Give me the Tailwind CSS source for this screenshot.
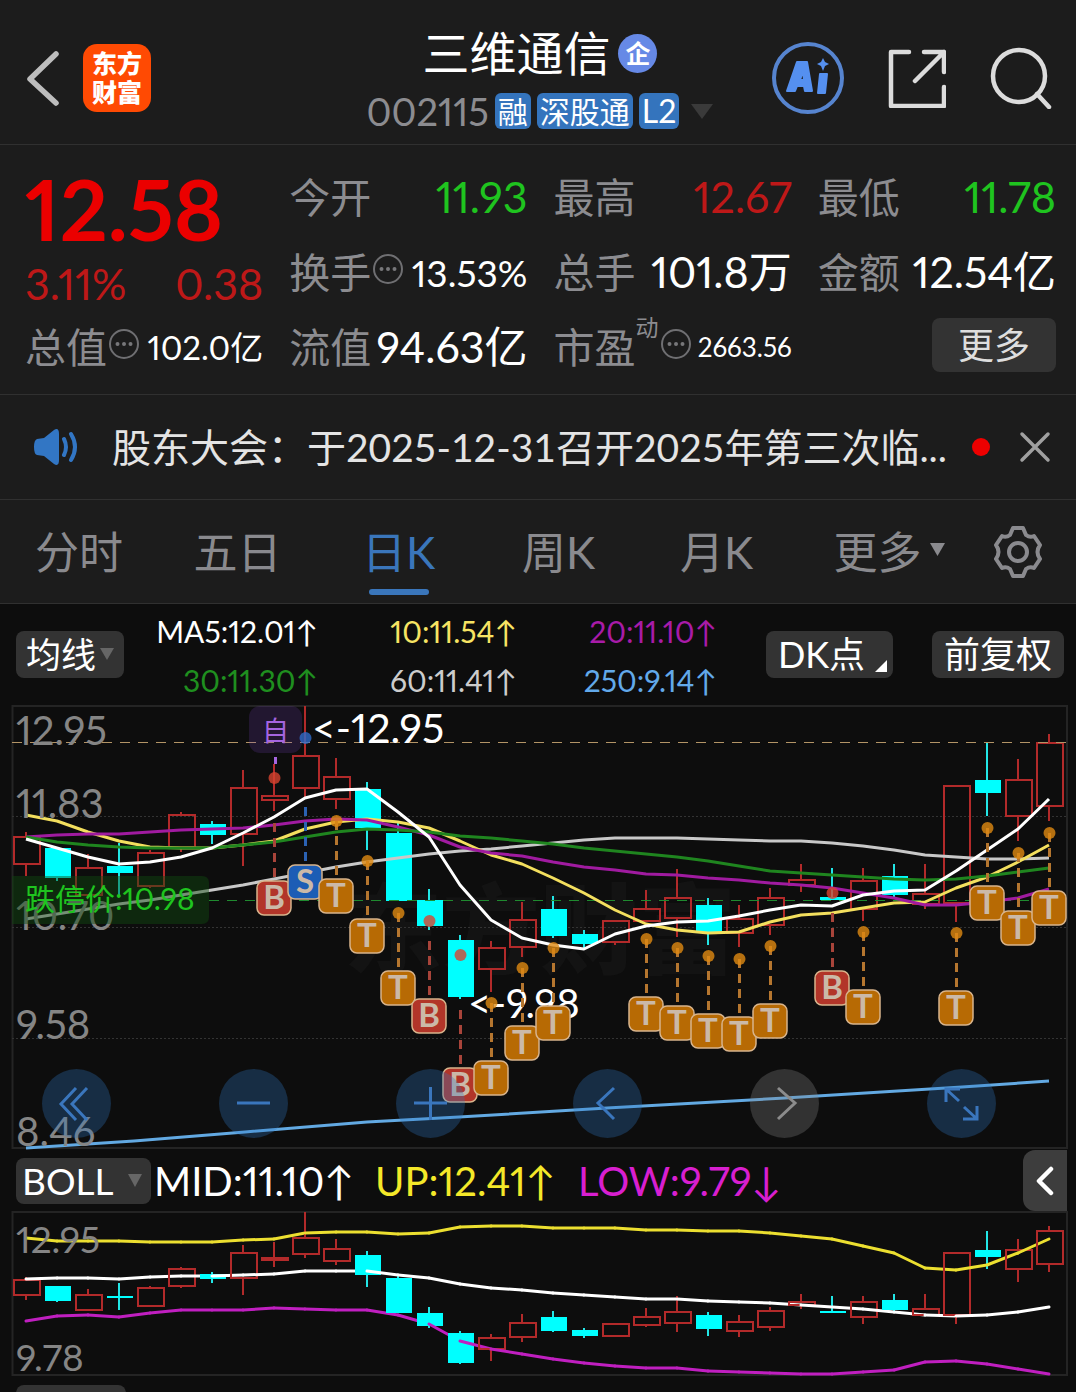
<!DOCTYPE html>
<html lang="zh-CN">
<head>
<meta charset="utf-8">
<meta name="viewport" content="width=device-width, initial-scale=1">
<title>三维通信 002115</title>
<script src="https://cdn.jsdelivr.net/npm/@tailwindcss/browser@4"></script>
</head>
<body class="h-screen overflow-hidden bg-[#0d0d0d] font-['Lato','Noto_Sans_CJK_SC',sans-serif] proportional-nums text-white">

<header class="grid h-[145px] grid-cols-[1fr_auto_1fr] items-center border-b border-[#303030] bg-[#1c1c1c] pt-3 pr-6 pl-6">
  <div class="flex items-center gap-[23px]">
    <button aria-label="返回" class="block"><svg width="36" height="60" viewBox="0 0 36 60" fill="none" stroke="#bdbdbd" stroke-width="5.5" stroke-linecap="round" stroke-linejoin="round"><path d="M32 6 6 31 32 55"/></svg></button>
    <a href="#" class="flex h-[68px] w-[68px] flex-col items-center justify-center rounded-[14px] bg-[#ff4a03] text-[25px] leading-[29px] font-black"><span>东方</span><span>财富</span></a>
  </div>
  <div class="flex flex-col items-center pt-1 pl-1">
    <div class="flex h-[62px] items-center gap-2">
      <h1 class="text-[47px] leading-[62px]">三维通信</h1>
      <span class="flex h-[39px] w-[39px] items-center justify-center rounded-full bg-[#6689e6] text-[25px] leading-none font-bold">企</span>
    </div>
    <div class="flex h-[54px] items-center gap-[6px]">
      <span class="text-[38px] leading-[54px] text-[#8c8c90]">002115</span>
      <span class="flex h-9 items-center rounded-md bg-[#3474bd] px-[3px] text-[30px]">融</span>
      <span class="flex h-9 items-center rounded-md bg-[#3474bd] px-[3px] text-[30px]">深股通</span>
      <span class="flex h-9 items-center rounded-md bg-[#3474bd] px-[3px] text-[32px]">L2</span>
      <svg class="ml-[6px]" width="22" height="15" viewBox="0 0 22 15"><path d="M0 0h22L11 15z" fill="#3a3a3a"/></svg>
    </div>
  </div>
  <div class="flex items-center justify-end gap-11">
    <button aria-label="AI"><svg width="72" height="74" viewBox="0 0 72 74"><circle cx="36" cy="37" r="34" fill="none" stroke="#5684cf" stroke-width="4"/><path fill="#5590f0" stroke="#5590f0" stroke-width="2" stroke-linejoin="round" fill-rule="evenodd" d="M25 21h10l5 29h-7l-1-5h-7l-2 5h-8zM28 39h4l-1-9z"/><path fill="#5590f0" stroke="#5590f0" stroke-width="2" stroke-linejoin="round" d="M48 33h7l-2 19h-7z"/><path fill="#5590f0" d="M51 17l2 4 4 2-4 2-2 5-2-5-4-2 4-2z"/></svg></button>
    <button aria-label="分享"><svg width="58" height="60" viewBox="0 0 58 60" fill="none" stroke="#dcdcdc" stroke-width="4.5" stroke-linecap="round" stroke-linejoin="round"><path d="M21 4H3v54h53V39M36 4h20v20M56 4 27 33"/></svg></button>
    <button aria-label="搜索"><svg width="62" height="62" viewBox="0 0 62 62" fill="none" stroke="#dcdcdc" stroke-width="4.5" stroke-linecap="round"><circle cx="29" cy="29" r="26"/><path d="m47 47 12 13"/></svg></button>
  </div>
</header>

<section class="grid h-[250px] grid-cols-4 grid-rows-[75px_75px_75px] gap-x-[26px] border-b border-[#303030] bg-[#1c1c1c] pt-[15px] pr-5 pl-[25px] text-[43px] whitespace-nowrap">
  <div class="row-span-2 text-[#be1818]">
    <div class="flex h-[98px] items-center text-[84px] leading-none font-bold text-[#eb0000]">12.58</div>
    <div class="flex h-[52px] items-center justify-between"><span>3.11%</span><span>0.38</span></div>
  </div>
  <div class="flex items-center justify-between"><span class="text-[41px] text-[#8c8c90]">今开</span><span class="text-[#1fc41f]">11.93</span></div>
  <div class="flex items-center justify-between"><span class="text-[41px] text-[#8c8c90]">最高</span><span class="text-[#be1818]">12.67</span></div>
  <div class="flex items-center justify-between"><span class="text-[41px] text-[#8c8c90]">最低</span><span class="text-[#1fc41f]">11.78</span></div>
  <div class="flex items-center justify-between"><span class="flex items-center text-[41px] text-[#8c8c90]">换手<svg class="mb-2" width="32" height="32" viewBox="0 0 32 32"><circle cx="17" cy="16" r="14" fill="none" stroke="#6f6f72" stroke-width="2"/><path d="M10.500 16h.01M17 16h.01M23.500 16h.01" stroke="#77777a" stroke-width="4" stroke-linecap="round"/></svg></span><span class="text-[37px]">13.53%</span></div>
  <div class="flex items-center justify-between"><span class="text-[41px] text-[#8c8c90]">总手</span><span>101.8万</span></div>
  <div class="flex items-center justify-between"><span class="text-[41px] text-[#8c8c90]">金额</span><span>12.54亿</span></div>
  <div class="flex items-center justify-between"><span class="flex items-center text-[41px] text-[#8c8c90]">总值<svg class="mb-2" width="32" height="32" viewBox="0 0 32 32"><circle cx="17" cy="16" r="14" fill="none" stroke="#6f6f72" stroke-width="2"/><path d="M10.500 16h.01M17 16h.01M23.500 16h.01" stroke="#77777a" stroke-width="4" stroke-linecap="round"/></svg></span><span class="text-[33px]">102.0亿</span></div>
  <div class="flex items-center justify-between"><span class="text-[41px] text-[#8c8c90]">流值</span><span>94.63亿</span></div>
  <div class="flex items-center justify-between"><span class="flex items-center text-[41px] text-[#8c8c90]">市盈<span class="mb-10 text-[23px] leading-none">动</span><svg class="mb-2" width="32" height="32" viewBox="0 0 32 32"><circle cx="17" cy="16" r="14" fill="none" stroke="#6f6f72" stroke-width="2"/><path d="M10.500 16h.01M17 16h.01M23.500 16h.01" stroke="#77777a" stroke-width="4" stroke-linecap="round"/></svg></span><span class="text-[26px]">2663.56</span></div>
  <div class="flex items-center justify-end"><button class="mb-[6px] h-[54px] w-[124px] rounded-lg bg-[#333] text-[36px] leading-none text-[#dedede]">更多</button></div>
</section>

<section class="flex h-[105px] items-center border-b border-[#303030] bg-[#1c1c1c] pr-6 pl-[34px]">
  <svg class="shrink-0" width="46" height="40" viewBox="0 0 46 40"><path d="M3 12q-3 1-3 8t3 8l7 1 10 8q5 3 5-4V7q0-7-5-4l-10 8z" fill="#3276c4"/><path d="M30 12q4 8 0 16M37 7q8 13 0 26" fill="none" stroke="#3276c4" stroke-width="4" stroke-linecap="round"/></svg>
  <a href="#" class="ml-8 min-w-0 flex-1 overflow-hidden text-[39px] whitespace-nowrap text-[#e4e4e4] tabular-nums">股东大会：于2025-12-31召开2025年第三次临...</a>
  <span class="mx-2 h-[18px] w-[18px] shrink-0 rounded-full bg-[#ee0000]"></span>
  <button aria-label="关闭" class="ml-[20px] shrink-0"><svg width="34" height="34" viewBox="0 0 34 34" stroke="#a0a0a0" stroke-width="3.500" stroke-linecap="round"><path d="M4 4l26 26M30 4 4 30"/></svg></button>
</section>

<nav class="grid h-[104px] grid-cols-[158fr_159fr_163fr_157fr_159fr_186fr_94fr] items-center border-b border-[#303030] bg-[#1c1c1c] text-[44px] text-[#8a8a8e]">
  <a href="#" class="text-center">分时</a>
  <a href="#" class="text-center">五日</a>
  <a href="#" class="relative text-center text-[#3a76bb]">日K<span class="absolute bottom-[-10px] left-1/2 h-[6px] w-[60px] -translate-x-1/2 rounded-full bg-[#3a76bb]"></span></a>
  <a href="#" class="text-center">周K</a>
  <a href="#" class="text-center">月K</a>
  <a href="#" class="flex items-center justify-center gap-2">更多<svg class="mb-1" width="15" height="13" viewBox="0 0 15 13"><path d="M0 0h15L7.500 13z" fill="#8a8a8e"/></svg></a>
  <button aria-label="设置" class="pl-[9px]"><svg width="54" height="54" viewBox="0 0 54 54" fill="none" stroke="#8a8a8e" stroke-width="4" stroke-linejoin="round"><circle cx="27" cy="27" r="9"/><path d="M22 3h10l3 7q4 3 8 1l6 9q-5 7 0 14l-6 9q-4-2-8 1l-3 7H22l-3-7q-4-3-8-1l-6-9q5-7 0-14l6-9q4 2 8-1z"/></svg></button>
</nav>

<section class="flex h-[100px] items-center pr-3 pl-4">
  <button class="flex h-[47px] w-[108px] shrink-0 items-center justify-center gap-1 rounded-lg bg-[#333] text-[35px] leading-none">均线<svg width="14" height="12" viewBox="0 0 14 12"><path d="M0 0h14L7 12z" fill="#666"/></svg></button>
  <div class="grid grid-cols-[194px_199px_200px] grid-rows-[49px_49px] items-center pt-1 text-right text-[30px] whitespace-nowrap">
    <span>MA5:12.01↑</span><span class="text-[#f7e463]">10:11.54↑</span><span class="text-[#a81ba8]">20:11.10↑</span>
    <span class="text-[#1f8f1f]">30:11.30↑</span><span class="text-[#cccccc]">60:11.41↑</span><span class="text-[#62a9ea]">250:9.14↑</span>
  </div>
  <button class="relative ml-auto h-[47px] w-[127px] shrink-0 rounded-lg bg-[#333] pr-4 text-[36px] leading-none">DK点<svg class="absolute right-[6px] bottom-[6px]" width="12" height="12" viewBox="0 0 12 12"><path d="M12 0v12H0z" fill="#fff"/></svg></button>
  <button class="ml-[39px] h-[47px] w-[132px] shrink-0 rounded-lg bg-[#333] text-[36px] leading-none">前复权</button>
</section>

<section class="relative">
  <svg id="kline" class="block h-auto w-full" viewBox="0 704 1076 446" role="img" aria-label="日K线图"></svg>
  <div class="absolute inset-x-0 bottom-3 flex justify-between pr-20 pl-[42px]">
    <button aria-label="最早" class="h-[69px] w-[69px] rounded-full bg-[#2f76c4]/30"><svg width="69" height="69" viewBox="0 0 69 69" fill="none" stroke="#3a76bd" stroke-width="3"><path d="M34 19 19 35l15 16M45 19 30 35l15 16"/></svg></button>
    <button aria-label="缩小" class="h-[69px] w-[69px] rounded-full bg-[#2f76c4]/30"><svg width="69" height="69" viewBox="0 0 69 69" fill="none" stroke="#3a76bd" stroke-width="3"><path d="M18 34h33"/></svg></button>
    <button aria-label="放大" class="h-[69px] w-[69px] rounded-full bg-[#2f76c4]/30"><svg width="69" height="69" viewBox="0 0 69 69" fill="none" stroke="#3a76bd" stroke-width="3"><path d="M18 34h33M34.500 18v33"/></svg></button>
    <button aria-label="左移" class="h-[69px] w-[69px] rounded-full bg-[#2f76c4]/30"><svg width="69" height="69" viewBox="0 0 69 69" fill="none" stroke="#3a76bd" stroke-width="3"><path d="M41 19 25 34l16 16"/></svg></button>
    <button aria-label="右移" class="h-[69px] w-[69px] rounded-full bg-[#888]/30"><svg width="69" height="69" viewBox="0 0 69 69" fill="none" stroke="#8c8c8c" stroke-width="3"><path d="m28 19 17 15-17 16"/></svg></button>
    <button aria-label="全屏" class="h-[69px] w-[69px] rounded-full bg-[#2f76c4]/30"><svg width="69" height="69" viewBox="0 0 69 69" fill="none" stroke="#3a76bd" stroke-width="3"><path d="M19 33V20h14M20 21l12 11M37 38l13 12M50 37v13H36"/></svg></button>
  </div>
</section>

<section class="flex h-[61px] items-center pr-[9px] pl-4 text-[40px] whitespace-nowrap">
  <button class="flex h-[46px] w-[135px] shrink-0 items-center justify-between rounded-lg bg-[#333] pr-[9px] pl-[6px] text-[37px] leading-none">BOLL<svg width="14" height="13" viewBox="0 0 14 13"><path d="M0 0h14L7 13z" fill="#666"/></svg></button>
  <span class="ml-[3px] w-[221px]">MID:11.10↑</span>
  <span class="w-[203px] text-[#f4e829]">UP:12.41↑</span>
  <span class="text-[#d81fd0]">LOW:9.79↓</span>
  <button aria-label="展开" class="ml-auto flex h-[61px] w-[44px] items-center justify-center rounded-l-xl bg-[#3d3d3d]"><svg width="20" height="30" viewBox="0 0 20 30" fill="none" stroke="#fff" stroke-width="4.500" stroke-linecap="round" stroke-linejoin="round"><path d="M16 3 4 15l12 12"/></svg></button>
</section>

<svg id="boll" class="block h-auto w-full" viewBox="0 1211 1076 166" role="img" aria-label="BOLL指标图"></svg>
<div class="pt-2 pl-4"><button aria-label="副图指标" class="h-[46px] w-[110px] rounded-lg bg-[#333]"></button></div>

<script>
const RED = '#b22a2a', CYAN = '#00ffff', STEP = 31, X0 = 26;
const cx = i => X0 + STEP * i;
const line = (ys, color, w = 3) => `<polyline fill="none" stroke="${color}" stroke-width="${w}" stroke-linejoin="round" points="${ys.map((y, i) => cx(i) + ',' + y).join(' ')}"/>`;
const segment = (ys, i, color) => i < ys.length - 1 ? `<path d="M${cx(i)} ${ys[i]}L${cx(i + 1)} ${ys[i + 1]}" stroke="${color}" stroke-width="3" stroke-linecap="round"/>` : '';
// candle: [rising, body top, body bottom, high, low]
const candle = ([up, t, b, h, l], i) => {
  const x = cx(i);
  return up
    ? `<path d="M${x} ${h}V${t}M${x} ${b}V${l}M${x - 12} ${t + 1}h26v${Math.max(b - t - 2, 1)}h-26z" fill="none" stroke="${RED}" stroke-width="2"/>`
    : `<path d="M${x} ${h}V${l}" stroke="#22e6e6" stroke-width="2"/><rect x="${x - 12}" y="${t}" width="26" height="${b - t}" fill="${CYAN}"/>`;
};
const label = (x, y, s, size = 40, fill = '#858585') => `<text x="${x}" y="${y}" font-size="${size}" fill="${fill}">${s}</text>`;

const days = [[1,836,865,832,876],[0,848,878,848,881],[1,867,896,854,896],[0,866,873,843,896],[1,852,887,850,888],[1,814,848,812,852],[0,824,835,821,844],[1,787,835,770,866],[1,795,801,764,811],[1,755,789,706,797],[1,776,800,758,809],[0,789,828,782,850],[0,833,901,823,901],[0,900,926,889,930],[0,940,997,935,999],[1,947,970,941,992],[1,919,948,902,957],[0,909,936,896,938],[0,934,944,930,948],[1,920,943,920,945],[1,908,922,890,922],[1,897,919,869,937],[0,905,932,898,945],[1,918,934,905,947],[1,897,926,888,935],[1,879,886,864,892],[0,897,900,868,900],[1,880,910,868,921],[0,876,895,864,897],[1,893,905,864,909],[1,785,904,785,922],[0,780,793,743,816],[1,779,817,759,841],[1,742,807,734,821]];
const ma5 = [839,848,857,864,862,857,848,833,817,798,790,789,812,837,885,920,938,945,949,934,926,922,921,916,910,905,906,895,891,890,871,850,829,799];
const ma10 = [815,821,832,841,847,848,848,845,841,829,822,819,822,828,841,855,864,878,893,910,924,930,933,932,922,915,913,908,903,902,888,877,862,845];
const ma20 = [837,835,834,834,832,830,829,828,825,821,819,820,827,835,847,853,856,862,867,870,874,875,878,880,883,885,888,893,898,905,905,902,898,889];
const ma30 = [837,842,845,847,848,848,848,845,842,837,832,829,830,832,836,838,841,844,848,851,854,857,861,866,871,873,875,877,879,880,879,876,872,868];
const ma60 = [919,914,909,904,900,895,890,885,879,873,867,862,858,854,851,849,846,843,840,838,838,838,839,840,841,841,843,846,850,855,857,859,859,858];
// trade marks: [day, kind, anchor y]
const marks = [[8,'B',778],[9,'S',738],[10,'T',821],[11,'T',861],[12,'T',913],[13,'B',921],[14,'B',955],[15,'T',1003],[16,'T',968],[17,'T',948],[20,'T',939],[21,'T',948],[22,'T',956],[23,'T',959],[24,'T',946],[26,'B',893],[27,'T',932],[30,'T',933],[31,'T',828],[32,'T',853],[33,'T',833]];
const tint = { B: ['#b23529', '#d8432f', '#a8443a'], S: ['#1c5db5', '#2f6bcb', '#2b62b3'], T: ['#b76a04', '#e08a12', '#b5762f'] };
const bottomOf = { '8B': 898, '9S': 882, '13B': 1016, '14B': 1085, '26B': 988 };
const mark = ([i, k, y]) => {
  const x = cx(i), by = bottomOf[i + k] || y + 75, from = k === 'T' ? y : by - 75, [bg, dot, dash] = tint[k];
  return `<path d="M${x + .5} ${from}V${by - 17}" stroke="${dash}" stroke-width="3" stroke-dasharray="9 6"/><circle cx="${x + .5}" cy="${y}" r="6" fill="${dot}" fill-opacity=".8"/>
  <rect x="${x - 17}" y="${by - 17}" width="34" height="34" rx="7" fill="${bg}" stroke="#d8b48c" stroke-width="1.500"/><text x="${x}" y="${by + 11}" font-size="33" font-weight="700" text-anchor="middle" fill="#cbb9a8">${k}</text>`;
};

document.getElementById('kline').innerHTML = `
  <text x="540" y="966" font-size="98" font-weight="900" text-anchor="middle" fill="#131313">东方财富</text>
  <rect x="12.500" y="706" width="1054.500" height="442" fill="none" stroke="#242424" stroke-width="2"/>
  <path d="M12 816.500H1067M12 927.500H1067M12 1038.500H1067" stroke="#333" stroke-dasharray="2 2"/>
  ${days.map(candle).join('')}
  <path d="M12 742.500H1067" stroke="#b39466" stroke-dasharray="10 8"/>
  <path d="M209 900.500H1067" stroke="#1f8a2f" stroke-dasharray="10 8"/>
  ${line(ma60, '#c8c8c8')}${line(ma10, '#f3df5e')}${line(ma20, '#a01ba0')}${line(ma30, '#1f851f')}${line(ma5, '#ffffff')}
  <polyline points="26,1148 134,1141 245,1132 367,1122 459,1117 607,1108 785,1098 962,1087 1049,1081" fill="none" stroke="#62a9e2" stroke-width="3"/>
  ${label(16, 745, '12.95')}${label(16, 818, '11.83')}${label(16, 930, '10.70')}${label(16, 1039, '9.58')}${label(16, 1146, '8.46')}
  <path d="M12 876H202q7 0 7 7v34q0 7-7 7H12z" fill="#0f4a0f" fill-opacity=".45"/>
  ${label(25, 910, '跌停价:10.98', 30, '#1fc41f')}
  <rect x="249" y="706" width="53" height="47" rx="11" fill="#7a3fc0" fill-opacity=".2"/>${label(262, 741, '自', 27, '#a565e0')}
  <path d="M275.500 757v7" stroke="#a565e0" stroke-width="3"/>
  ${label(312, 743, '&lt;-12.95', 41, '#fff')}${label(468, 1018, '&lt;-9.98', 40, '#fff')}
  ${marks.map(mark).join('')}`;

const bollDays = [[1,1279,1296,1277,1300],[0,1286,1301,1286,1302],[1,1294,1311,1289,1311],[0,1296,1298,1283,1310],[1,1287,1307,1286,1307],[1,1268,1287,1267,1288],[0,1274,1279,1272,1283],[1,1252,1279,1245,1295],[1,1257,1261,1242,1267],[1,1237,1255,1212,1258],[1,1248,1262,1239,1265],[0,1255,1275,1251,1287],[0,1278,1313,1274,1313],[0,1313,1326,1307,1328],[0,1333,1363,1331,1364],[1,1337,1350,1334,1361],[1,1322,1338,1314,1342],[0,1317,1331,1311,1332],[0,1330,1336,1328,1338],[1,1323,1337,1323,1337],[1,1316,1326,1308,1327],[1,1311,1324,1296,1332],[0,1315,1329,1312,1336],[1,1321,1332,1315,1337],[1,1310,1328,1307,1331],[1,1301,1306,1294,1309],[0,1311,1313,1296,1313],[1,1301,1318,1296,1324],[0,1300,1310,1294,1312],[1,1308,1316,1294,1316],[1,1252,1316,1252,1324],[0,1250,1257,1231,1269],[1,1249,1270,1239,1282],[1,1230,1265,1226,1272]];
const up = [1238,1241,1241,1241,1242,1242,1242,1240,1239,1233,1232,1232,1234,1233,1227,1226,1226,1228,1228,1228,1230,1230,1231,1231,1233,1236,1239,1246,1253,1268,1270,1265,1253,1239];
const mid = [1279,1278,1278,1279,1277,1276,1276,1275,1274,1271,1271,1271,1275,1278,1284,1288,1290,1293,1295,1297,1299,1299,1301,1302,1303,1305,1307,1309,1312,1315,1316,1315,1312,1307];
const low = [1321,1316,1315,1317,1313,1310,1310,1310,1308,1309,1310,1310,1315,1324,1341,1349,1354,1359,1363,1366,1368,1368,1371,1372,1373,1374,1374,1372,1370,1362,1361,1364,1369,1374];
document.getElementById('boll').innerHTML = `
  <rect x="12.500" y="1212" width="1054.500" height="163" fill="none" stroke="#242424" stroke-width="2"/>
  ${bollDays.map((d, i) => candle(d, i) + segment(up, i, '#ecdf30') + segment(mid, i, '#ffffff') + segment(low, i, '#c01fc0')).join('')}
  ${label(16, 1253, '12.95', 37)}${label(16, 1371, '9.78', 37)}`;
</script>
</body>
</html>
